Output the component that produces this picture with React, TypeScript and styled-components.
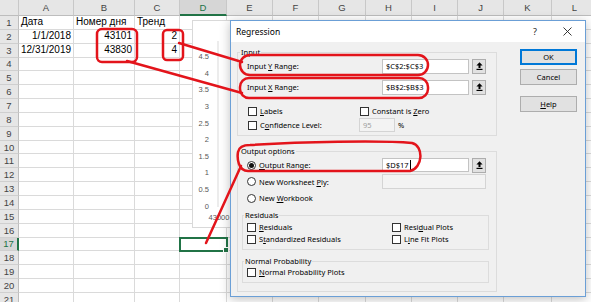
import styled, { createGlobalStyle, css } from "styled-components";

const GlobalStyle = createGlobalStyle`
  html, body { margin: 0; padding: 0; }
  body {
    width: 591px;
    height: 302px;
    overflow: hidden;
    background: #fff;
    font-family: "Liberation Sans", Arial, sans-serif;
  }
`;

const COLS = [19, 55, 61, 45, 47, 46, 46, 47, 46, 46, 46, 48, 46];
const LETTERS = ["", "A", "B", "C", "D", "E", "F", "G", "H", "I", "J", "K", "L"];
const ROWS = 21;
const DATA = [
  ["Дата", "Номер дня", "Тренд"],
  ["1/1/2018", "43101", "2"],
  ["12/31/2019", "43830", "4"],
];

const Page = styled.div`
  position: relative;
  width: 591px;
  height: 302px;
  overflow: hidden;
`;

const Sheet = styled.div`
  display: grid;
  grid-template-columns: ${COLS.map((c) => c + "px").join(" ")};
  grid-template-rows: 16px repeat(${ROWS}, 13.85px);
`;

const Corner = styled.div`
  background: #e6e6e6;
  border-right: 1px solid #c8c8c8;
  border-bottom: 1px solid #bdbdbd;
  box-sizing: border-box;
`;

const ColHead = styled.div<{ $active?: boolean }>`
  box-sizing: border-box;
  display: flex;
  align-items: center;
  justify-content: center;
  font-size: 9.5px;
  background: ${(p) => (p.$active ? "#d6d6d6" : "#e6e6e6")};
  color: ${(p) => (p.$active ? "#217346" : "#444")};
  border-right: 1px solid #c8c8c8;
  border-bottom: ${(p) => (p.$active ? "2px solid #217346" : "1px solid #bdbdbd")};
`;

const RowHead = styled.div<{ $active?: boolean }>`
  box-sizing: border-box;
  display: flex;
  align-items: center;
  justify-content: center;
  font-size: 9.5px;
  background: ${(p) => (p.$active ? "#d6d6d6" : "#e6e6e6")};
  color: ${(p) => (p.$active ? "#217346" : "#444")};
  border-bottom: 1px solid #cfcfcf;
  border-right: ${(p) => (p.$active ? "2px solid #217346" : "1px solid #bdbdbd")};
`;

const Cell = styled.div<{ $align: "left" | "right"; $selected?: boolean }>`
  box-sizing: border-box;
  border-right: 1px solid #dadada;
  border-bottom: 1px solid #dadada;
  padding: 0 2px;
  font-size: 10px;
  line-height: 12.85px;
  white-space: nowrap;
  color: #000;
  text-align: ${(p) => p.$align};
  ${(p) =>
    p.$selected &&
    css`
      position: relative;
      outline: 2px solid #217346;
      outline-offset: -1px;
      z-index: 1;
      &::after {
        content: "";
        position: absolute;
        right: -3px;
        bottom: -3px;
        width: 4px;
        height: 4px;
        background: #217346;
        border: 1px solid #fff;
      }
    `}
`;

const ChartBox = styled.div`
  position: absolute;
  left: 192px;
  top: 20px;
  width: 60px;
  height: 208px;
  box-sizing: border-box;
  background: #fff;
  border: 1px solid #d9d9d9;
  z-index: 2;
`;

const Window = styled.div`
  position: absolute;
  left: 230px;
  top: 20px;
  width: 356px;
  height: 277px;
  box-sizing: border-box;
  border: 1px solid #6b9fd6;
  background: #f0f0f0;
  box-shadow: 0 2px 10px rgba(0, 0, 0, 0.25);
  font-family: "Noto Sans", "Open Sans", sans-serif;
  font-size: 7.5px;
  color: #000;
  display: flex;
  flex-direction: column;
  z-index: 3;
`;

const TitleBar = styled.div`
  height: 21px;
  flex: none;
  background: #fff;
  display: flex;
  align-items: center;
  padding-left: 5px;
`;

const Title = styled.div`
  flex: 1;
  font-size: 8.5px;
`;

const TitleGlyph = styled.div<{ $w: number }>`
  width: ${(p) => p.$w}px;
  height: 21px;
  display: flex;
  align-items: center;
  justify-content: center;
  font-size: 9px;
  color: #222;
`;

const Body = styled.div`
  flex: 1;
  display: flex;
  gap: 23px;
  padding: 5px 8px 0 6px;
`;

const LeftCol = styled.div`
  width: 260px;
  display: flex;
  flex-direction: column;
`;

const RightCol = styled.div`
  width: 57px;
  padding-top: 2px;
  display: flex;
  flex-direction: column;
`;

const Group = styled.fieldset<{ $top?: number; $pad: string }>`
  margin: ${(p) => p.$top ?? 0}px 0 0 0;
  padding: ${(p) => p.$pad};
  border: 1px solid #dcdcdc;
  min-width: 0;
`;

const Caption = styled.legend`
  padding: 0 1px;
  margin-left: -2px;
  line-height: 10px;
  font-size: 7.5px;
  color: #000;
`;

const Row = styled.div<{ $h: number; $top?: number; $indent?: number }>`
  display: flex;
  align-items: center;
  height: ${(p) => p.$h}px;
  margin-top: ${(p) => p.$top ?? 0}px;
  padding-left: ${(p) => p.$indent ?? 5}px;
  white-space: nowrap;
`;

const Item = styled.label<{ $w?: number }>`
  display: flex;
  align-items: center;
  flex: none;
  white-space: pre;
  width: ${(p) => (p.$w ? p.$w + "px" : "auto")};
`;

const Text = styled.span`
  white-space: pre;
`;

const Check = styled.span`
  width: 9px;
  height: 9px;
  box-sizing: border-box;
  border: 1px solid #333;
  background: #fff;
  margin: 0 3px 0 1px;
  flex: none;
`;

const Radio = styled.span<{ $on?: boolean }>`
  position: relative;
  width: 9px;
  height: 9px;
  box-sizing: border-box;
  border: 1px solid #333;
  border-radius: 50%;
  background: #fff;
  margin-right: 3px;
  flex: none;
  ${(p) =>
    p.$on &&
    css`
      &::after {
        content: "";
        position: absolute;
        inset: 1px;
        border-radius: 50%;
        background: #111;
      }
    `}
`;

const Key = styled.span`
  text-decoration: underline;
`;

const TextBox = styled.div<{ $w: number; $h?: number; $disabled?: boolean }>`
  width: ${(p) => p.$w}px;
  height: ${(p) => p.$h ?? 15}px;
  box-sizing: border-box;
  flex: none;
  display: flex;
  align-items: center;
  padding-left: 3px;
  background: ${(p) => (p.$disabled ? "#f3f3f3" : "#fff")};
  border: 1px solid ${(p) => (p.$disabled ? "#d4d4d4" : "#c3c3c3")};
  color: ${(p) => (p.$disabled ? "#a0a0a0" : "#000")};
`;

const Caret = styled.span`
  width: 1px;
  height: 11px;
  background: #000;
  margin-left: 1px;
`;

const PickButton = styled.div`
  width: 14px;
  height: 15px;
  margin-left: 3px;
  box-sizing: border-box;
  flex: none;
  display: flex;
  align-items: center;
  justify-content: center;
  background: #e1e1e1;
  border: 1px solid #adadad;
`;

const Percent = styled.span`
  margin-left: 3px;
`;

const TwoCols = styled.div`
  display: grid;
  grid-template-columns: 145px auto;
  grid-auto-rows: 12px;
  align-items: center;
  white-space: nowrap;
`;

const Button = styled.div<{ $primary?: boolean; $top: number }>`
  height: 16px;
  margin-top: ${(p) => p.$top}px;
  box-sizing: border-box;
  display: flex;
  align-items: center;
  justify-content: center;
  background: #e1e1e1;
  border: 1px solid ${(p) => (p.$primary ? "#0078d7" : "#adadad")};
  box-shadow: ${(p) => (p.$primary ? "inset 0 0 0 1px #0078d7" : "none")};
`;

const Overlay = styled.svg`
  position: absolute;
  left: 0;
  top: 0;
  z-index: 4;
  pointer-events: none;
`;

const PickIcon = () => (
  <svg width="7" height="8" viewBox="0 0 7 8">
    <path d="M3.5 0.3 L6.6 3.6 H4.5 V6 H2.5 V3.6 H0.4 Z" fill="#000" />
    <rect x="0.5" y="6.8" width="6" height="1.2" fill="#000" />
  </svg>
);

const CloseIcon = () => (
  <svg width="9" height="9" viewBox="0 0 9 9">
    <path d="M0.5 0.5 L8.5 8.5 M8.5 0.5 L0.5 8.5" stroke="#222" strokeWidth="0.9" />
  </svg>
);

const CHART_LABELS = ["0", "0.5", "1", "1.5", "2", "2.5", "3", "3.5", "4", "4.5"];

const Chart = () => (
  <ChartBox>
    <svg width="58" height="206">
      <line x1="25" y1="20" x2="25" y2="186" stroke="#d9d9d9" strokeWidth="1" />
      {CHART_LABELS.map((t, i) => (
        <text
          key={t}
          x="16"
          y={185 - i * 16.6 + 2.6}
          textAnchor="end"
          fontSize="7.5"
          fontFamily="Liberation Sans, Arial, sans-serif"
          fill="#595959"
        >
          {t}
        </text>
      ))}
      <text
        x="26"
        y="199"
        textAnchor="middle"
        fontSize="7.5"
        fontFamily="Liberation Sans, Arial, sans-serif"
        fill="#595959"
      >
        43000
      </text>
    </svg>
  </ChartBox>
);

const Spreadsheet = () => {
  const cells = [];
  LETTERS.forEach((l, c) =>
    c === 0 ? (
      cells.push(<Corner key="corner" />)
    ) : (
      cells.push(
        <ColHead key={"h" + c} $active={l === "D"}>
          {l}
        </ColHead>
      )
    )
  );
  for (let r = 1; r <= ROWS; r++) {
    cells.push(
      <RowHead key={"r" + r} $active={r === 17}>
        {r}
      </RowHead>
    );
    for (let c = 1; c < LETTERS.length; c++) {
      const text = DATA[r - 1]?.[c - 1] ?? "";
      cells.push(
        <Cell key={r + "-" + c} $align={r === 1 ? "left" : "right"} $selected={r === 17 && c === 4}>
          {text}
        </Cell>
      );
    }
  }
  return <Sheet>{cells}</Sheet>;
};

const RegressionDialog = () => (
  <Window>
    <TitleBar>
      <Title>Regression</Title>
      <TitleGlyph $w={28}>?</TitleGlyph>
      <TitleGlyph $w={36}>
        <CloseIcon />
      </TitleGlyph>
    </TitleBar>
    <Body>
      <LeftCol>
        <Group $pad="1px 7px 3px 4px">
          <Caption>Input</Caption>
          <Row $h={16}>
            <Item $w={135}>
              <Text>
                Input <Key>Y</Key> Range:
              </Text>
            </Item>
            <TextBox $w={87}>$C$2:$C$3</TextBox>
            <PickButton>
              <PickIcon />
            </PickButton>
          </Row>
          <Row $h={16} $top={5}>
            <Item $w={135}>
              <Text>
                Input <Key>X</Key> Range:
              </Text>
            </Item>
            <TextBox $w={87}>$B$2:$B$3</TextBox>
            <PickButton>
              <PickIcon />
            </PickButton>
          </Row>
          <Row $h={14} $top={9}>
            <Item $w={112}>
              <Check />
              <Text>
                <Key>L</Key>abels
              </Text>
            </Item>
            <Item>
              <Check />
              <Text>
                Constant is <Key>Z</Key>ero
              </Text>
            </Item>
          </Row>
          <Row $h={14}>
            <Item $w={112}>
              <Check />
              <Text>
                C<Key>o</Key>nfidence Level:
              </Text>
            </Item>
            <TextBox $w={36} $h={14} $disabled>
              95
            </TextBox>
            <Percent>%</Percent>
          </Row>
        </Group>

        <Group $top={10} $pad="2px 7px 8px 4px">
          <Caption>Output options</Caption>
          <Row $h={14}>
            <Item $w={135}>
              <Radio $on />
              <Text>
                <Key>O</Key>utput Range:
              </Text>
            </Item>
            <TextBox $w={87} $h={14}>
              $D$17
              <Caret />
            </TextBox>
            <PickButton>
              <PickIcon />
            </PickButton>
          </Row>
          <Row $h={15} $top={2}>
            <Item $w={135}>
              <Radio />
              <Text>
                New Worksheet <Key>P</Key>ly:
              </Text>
            </Item>
            <TextBox $w={104} $disabled />
          </Row>
          <Row $h={14} $top={2}>
            <Item>
              <Radio />
              <Text>
                New <Key>W</Key>orkbook
              </Text>
            </Item>
          </Row>

          <Group $top={5} $pad="1px 7px 4px 3px">
            <Caption>Residuals</Caption>
            <TwoCols>
              <Item>
                <Check />
                <Text>
                  <Key>R</Key>esiduals
                </Text>
              </Item>
              <Item>
                <Check />
                <Text>
                  Resi<Key>d</Key>ual Plots
                </Text>
              </Item>
              <Item>
                <Check />
                <Text>
                  S<Key>t</Key>andardized Residuals
                </Text>
              </Item>
              <Item>
                <Check />
                <Text>
                  L<Key>i</Key>ne Fit Plots
                </Text>
              </Item>
            </TwoCols>
          </Group>

          <Group $top={6} $pad="0 7px 4px 3px">
            <Caption>Normal Probability</Caption>
            <Row $h={12} $indent={0}>
              <Item>
                <Check />
                <Text>
                  <Key>N</Key>ormal Probability Plots
                </Text>
              </Item>
            </Row>
          </Group>
        </Group>
      </LeftCol>

      <RightCol>
        <Button $primary $top={0}>
          OK
        </Button>
        <Button $top={4}>Cancel</Button>
        <Button $top={11}>
          <Text>
            <Key>H</Key>elp
          </Text>
        </Button>
      </RightCol>
    </Body>
  </Window>
);

const RED = "#e3141b";

const Annotations = () => (
  <Overlay width="591" height="302" viewBox="0 0 591 302">
    <g fill="none" stroke={RED} strokeWidth="2.5" strokeLinecap="round">
      <rect x="97" y="29" width="40" height="33" rx="5" />
      <rect x="163" y="30" width="20" height="30" rx="4" />
      <rect x="240" y="55" width="188" height="20" rx="10" />
      <rect x="240" y="78" width="188" height="20" rx="9" />
      <path d="M250 145 C 300 142, 380 140, 412 143 C 424 146, 423 168, 410 171 L 248 171 C 238 171, 237 158, 238 152 C 239 147, 243 145, 250 145 Z" />
      <line x1="179" y1="43" x2="242" y2="62" />
      <line x1="127" y1="61" x2="242" y2="93" />
      <line x1="241" y1="166" x2="206" y2="243" />
    </g>
  </Overlay>
);

const App = () => {
  return (
    <Page>
      <GlobalStyle />
      <Spreadsheet />
      <Chart />
      <RegressionDialog />
      <Annotations />
    </Page>
  );
};

export default App;
